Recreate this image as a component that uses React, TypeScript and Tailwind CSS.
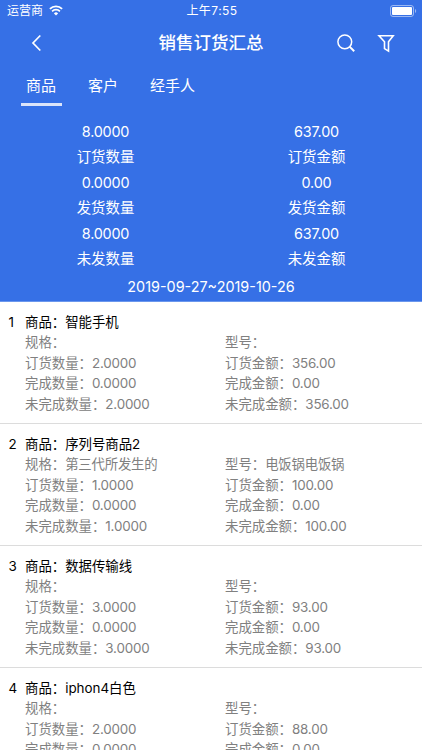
import { useState } from "react";

interface OrderItem {
  name: string;
  spec: string;
  model: string;
  quantity: string;
  doneQuantity: string;
  openQuantity: string;
  amount: string;
  doneAmount: string;
  openAmount: string;
}

const TABS = ["商品", "客户", "经手人"];

const SUMMARY = [
  [
    { value: "8.0000", label: "订货数量" },
    { value: "0.0000", label: "发货数量" },
    { value: "8.0000", label: "未发数量" },
  ],
  [
    { value: "637.00", label: "订货金额" },
    { value: "0.00", label: "发货金额" },
    { value: "637.00", label: "未发金额" },
  ],
];

const ITEMS: OrderItem[] = [
  {
    name: "智能手机", spec: "", model: "",
    quantity: "2.0000", doneQuantity: "0.0000", openQuantity: "2.0000",
    amount: "356.00", doneAmount: "0.00", openAmount: "356.00",
  },
  {
    name: "序列号商品2", spec: "第三代所发生的", model: "电饭锅电饭锅",
    quantity: "1.0000", doneQuantity: "0.0000", openQuantity: "1.0000",
    amount: "100.00", doneAmount: "0.00", openAmount: "100.00",
  },
  {
    name: "数据传输线", spec: "", model: "",
    quantity: "3.0000", doneQuantity: "0.0000", openQuantity: "3.0000",
    amount: "93.00", doneAmount: "0.00", openAmount: "93.00",
  },
  {
    name: "iphon4白色", spec: "", model: "",
    quantity: "2.0000", doneQuantity: "0.0000", openQuantity: "2.0000",
    amount: "88.00", doneAmount: "0.00", openAmount: "88.00",
  },
];

function StatusBar() {
  return (
    <div className="grid h-[22px] grid-cols-3 items-center pl-[7px] pr-[5px] text-[12px]">
      <div className="flex items-center gap-[6px]">
        <span>运营商</span>
        <svg className="mb-px" width="14" height="11" viewBox="0 0 14 11" fill="none">
          <path d="M0.9 3.9a8.7 8.7 0 0 1 12.2 0" stroke="white" strokeWidth="1.9" />
          <path d="M3.1 6.3a5.6 5.6 0 0 1 7.8 0" stroke="white" strokeWidth="1.8" />
          <path d="M7 10.6 4.9 8.4a3 3 0 0 1 4.2 0z" fill="white" />
        </svg>
      </div>
      <span className="text-center tracking-[0.45px]">上午7:55</span>
      <svg className="mb-px justify-self-end" width="27" height="12" viewBox="0 0 27 12" fill="none">
        <rect x="0.5" y="0.5" width="23" height="11" rx="2.5" stroke="white" strokeOpacity="0.5" />
        <rect x="2" y="2" width="20" height="8" rx="1" fill="white" />
        <path d="M25 4v4c1.6-.6 1.6-3.4 0-4z" fill="white" fillOpacity="0.5" />
      </svg>
    </div>
  );
}

function NavBar() {
  return (
    <div className="grid h-[42px] grid-cols-[1fr_auto_1fr] items-center pl-[31px] pr-[27px]">
      <svg width="11" height="18" viewBox="0 0 11 18" fill="none">
        <path d="M9.3 1.5 2 9l7.3 7.5" stroke="white" strokeWidth="1.7" />
      </svg>
      <h1 className="mr-[4px] text-[17.5px] font-medium">销售订货汇总</h1>
      <div className="flex items-center justify-end gap-[22px]">
        <svg width="18" height="18" viewBox="0 0 18 18" fill="none">
          <circle cx="7.8" cy="7.8" r="6.9" stroke="white" strokeWidth="1.5" />
          <path d="m12.6 12.6 4.6 4.6" stroke="white" strokeWidth="2" />
        </svg>
        <svg width="18" height="19" viewBox="0 0 18 19" fill="none">
          <path d="M2 1.7h14.2l-4.7 6.1v9.300l-4-2.500V7.800z" stroke="white" strokeWidth="1.6" />
        </svg>
      </div>
    </div>
  );
}

function Field({ label, value }: { label: string; value: string }) {
  return (
    <p className="whitespace-nowrap">
      {label}：<span className="tracking-[-0.2px]">{value}</span>
    </p>
  );
}

function ItemRow({ item, index }: { item: OrderItem; index: number }) {
  return (
    <li className="flex h-[122px] border-b border-[#dcdcdc] pt-[10px] text-[13.4px] leading-[20.4px] text-[#808080]">
      <span className="w-[25px] pl-[8.5px] text-black">{index}</span>
      <div className="flex-1">
        <p className="text-black">商品：{item.name}</p>
        <div className="grid grid-cols-[200px_1fr]">
          <Field label="规格" value={item.spec} />
          <Field label="型号" value={item.model} />
          <Field label="订货数量" value={item.quantity} />
          <Field label="订货金额" value={item.amount} />
          <Field label="完成数量" value={item.doneQuantity} />
          <Field label="完成金额" value={item.doneAmount} />
          <Field label="未完成数量" value={item.openQuantity} />
          <Field label="未完成金额" value={item.openAmount} />
        </div>
      </div>
    </li>
  );
}

export default function App() {
  const [activeTab, setActiveTab] = useState(0);

  return (
    <div
      lang="zh-CN"
      className="h-[750px] w-[422px] overflow-hidden bg-white font-['Inter','Noto_Sans_CJK_SC',sans-serif]"
    >
      <header className="h-[302px] border-b border-[#6b97ed] bg-[#3670e6] text-white">
        <StatusBar />
        <NavBar />

        {/* Tabs */}
        <nav className="flex h-[42px] gap-[21px] pl-[21px] text-[15px]">
          {TABS.map((tab, i) => (
            <button
              key={tab}
              onClick={() => setActiveTab(i)}
              className={`border-b-[3px] pt-[6px] pr-[6px] pl-[5px] ${
                i === activeTab ? "border-[#dbe4fa]" : "border-transparent"
              }`}
            >
              {tab}
            </button>
          ))}
        </nav>

        {/* Totals */}
        <div className="grid grid-cols-2 pt-[13px] text-center text-[14.4px] leading-[25.4px]">
          {SUMMARY.map((column, i) => (
            <div key={i}>
              {column.map((total) => (
                <div key={total.label}>
                  <p className="tracking-[-0.2px]">{total.value}</p>
                  <p>{total.label}</p>
                </div>
              ))}
            </div>
          ))}
        </div>
        <p className="pt-[2.5px] text-center text-[14.4px] leading-[25.4px]">2019-09-27~2019-10-26</p>
      </header>

      <ul>
        {ITEMS.map((item, i) => (
          <ItemRow key={item.name} item={item} index={i + 1} />
        ))}
      </ul>
    </div>
  );
}
